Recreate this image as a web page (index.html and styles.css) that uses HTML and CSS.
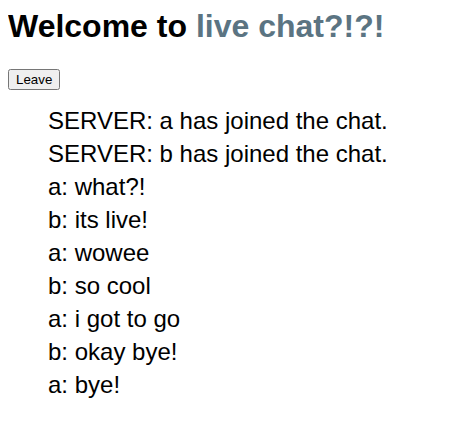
FILE: index.html
```html
<!DOCTYPE html>
<html>
<head>
<meta charset="utf-8">
<link rel="stylesheet" href="styles.css">
</head>
<body>
<h1 class="title">Welcome to <span class="accent">live chat?!?!</span></h1>
<button class="leave">Leave</button>
<ul class="messages">
<li>SERVER: a has joined the chat.</li>
<li>SERVER: b has joined the chat.</li>
<li>a: what?!</li>
<li>b: its live!</li>
<li>a: wowee</li>
<li>b: so cool</li>
<li>a: i got to go</li>
<li>b: okay bye!</li>
<li>a: bye!</li>
</ul>
</body>
</html>
```
FILE: styles.css
```css
body {
  margin: 8px;
  font-family: "Liberation Sans", Arial, sans-serif;
  color: #000;
  background: #fff;
}
.title {
  font-size: 32px;
  font-weight: bold;
  margin: 0 0 24px;
  line-height: 37px;
}
.accent {
  color: #5b7482;
}
.leave {
  font-family: "Liberation Sans", Arial, sans-serif;
  font-size: 13.333px;
  margin: 0;
}
.messages {
  list-style: none;
  padding-left: 40px;
  margin: 17px 0;
  font-size: 24px;
}
.messages li {
  line-height: 27px;
  margin-bottom: 6px;
}
```
